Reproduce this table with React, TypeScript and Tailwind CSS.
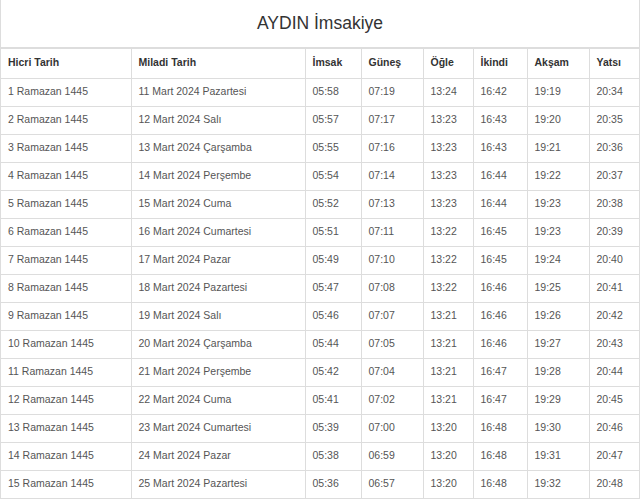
import React from "react";

const rows: string[][] = [
  ["1 Ramazan 1445", "11 Mart 2024 Pazartesi", "05:58", "07:19", "13:24", "16:42", "19:19", "20:34"],
  ["2 Ramazan 1445", "12 Mart 2024 Salı", "05:57", "07:17", "13:23", "16:43", "19:20", "20:35"],
  ["3 Ramazan 1445", "13 Mart 2024 Çarşamba", "05:55", "07:16", "13:23", "16:43", "19:21", "20:36"],
  ["4 Ramazan 1445", "14 Mart 2024 Perşembe", "05:54", "07:14", "13:23", "16:44", "19:22", "20:37"],
  ["5 Ramazan 1445", "15 Mart 2024 Cuma", "05:52", "07:13", "13:23", "16:44", "19:23", "20:38"],
  ["6 Ramazan 1445", "16 Mart 2024 Cumartesi", "05:51", "07:11", "13:22", "16:45", "19:23", "20:39"],
  ["7 Ramazan 1445", "17 Mart 2024 Pazar", "05:49", "07:10", "13:22", "16:45", "19:24", "20:40"],
  ["8 Ramazan 1445", "18 Mart 2024 Pazartesi", "05:47", "07:08", "13:22", "16:46", "19:25", "20:41"],
  ["9 Ramazan 1445", "19 Mart 2024 Salı", "05:46", "07:07", "13:21", "16:46", "19:26", "20:42"],
  ["10 Ramazan 1445", "20 Mart 2024 Çarşamba", "05:44", "07:05", "13:21", "16:46", "19:27", "20:43"],
  ["11 Ramazan 1445", "21 Mart 2024 Perşembe", "05:42", "07:04", "13:21", "16:47", "19:28", "20:44"],
  ["12 Ramazan 1445", "22 Mart 2024 Cuma", "05:41", "07:02", "13:21", "16:47", "19:29", "20:45"],
  ["13 Ramazan 1445", "23 Mart 2024 Cumartesi", "05:39", "07:00", "13:20", "16:48", "19:30", "20:46"],
  ["14 Ramazan 1445", "24 Mart 2024 Pazar", "05:38", "06:59", "13:20", "16:48", "19:31", "20:47"],
  ["15 Ramazan 1445", "25 Mart 2024 Pazartesi", "05:36", "06:57", "13:20", "16:48", "19:32", "20:48"],
  ["", "", "", "", "", "", "", ""],
];

const headers = ["Hicri Tarih", "Miladi Tarih", "İmsak", "Güneş", "Öğle", "İkindi", "Akşam", "Yatsı"];
const widths = [130, 174, 56, 62, 50, 54, 62, 51];

export default function App() {
  return (
    <div
      className="w-[640px] h-[499px] overflow-hidden bg-white border-l border-r border-[#dddddd]"
      style={{ fontFamily: '"Liberation Sans", Arial, sans-serif' }}
    >
      <div className="h-[47px] flex items-center justify-center text-[17.5px] text-[#333333]">
        AYDIN İmsakiye
      </div>
      <table className="table-fixed border-collapse w-[638px] text-[10.5px]">
        <colgroup>
          {widths.map((w, i) => (
            <col key={i} style={{ width: w }} />
          ))}
        </colgroup>
        <thead>
          <tr className="h-[30px] border-t-2 border-b border-[#dddddd]">
            {headers.map((h, i) => (
              <th
                key={i}
                className={`text-left font-bold text-[#333333] px-[7px] p-0 align-middle ${i > 0 ? "border-l border-[#dddddd]" : ""}`}
              >
                {h}
              </th>
            ))}
          </tr>
        </thead>
        <tbody>
          {rows.map((r, ri) => (
            <tr key={ri} className="h-[28px] border-b border-[#dddddd]">
              {r.map((c, ci) => (
                <td
                  key={ci}
                  className={`text-[#555555] px-[7px] align-middle whitespace-nowrap ${ci > 0 ? "border-l border-[#dddddd]" : ""}`}
                >
                  {c}
                </td>
              ))}
            </tr>
          ))}
        </tbody>
      </table>
    </div>
  );
}
